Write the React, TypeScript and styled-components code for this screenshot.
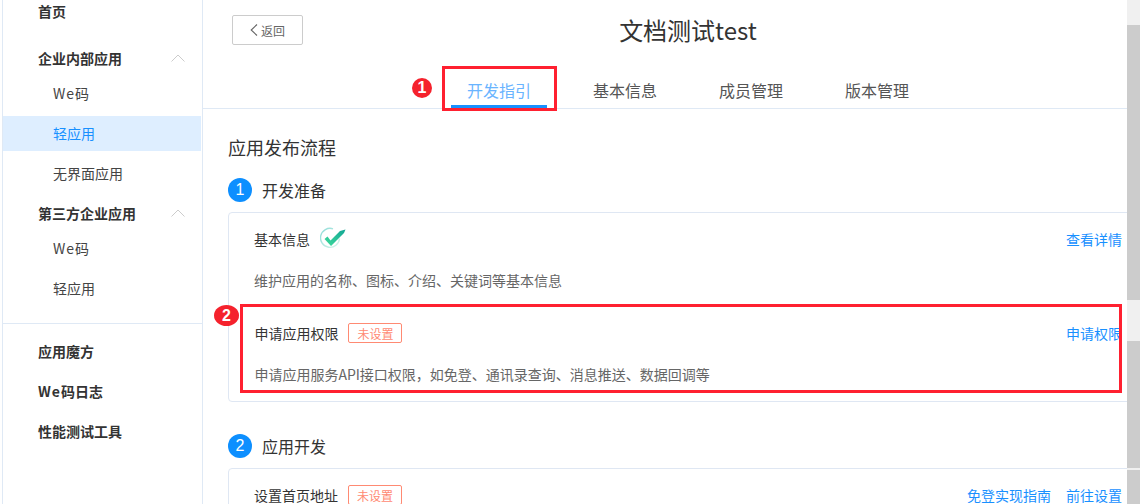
import styled, { createGlobalStyle } from "styled-components";

const GlobalStyle = createGlobalStyle`
  html, body {
    margin: 0;
    padding: 0;
    background: #fff;
    overflow: hidden;
  }
  * {
    box-sizing: border-box;
  }
`;

const Page = styled.div`
  position: relative;
  display: flex;
  width: 1140px;
  height: 504px;
  padding-left: 2px;
  overflow: hidden;
  font-family: "Noto Sans CJK SC", "Open Sans", sans-serif;
  font-size: 14px;
  color: #333;
`;

const Sidebar = styled.aside`
  flex: 0 0 201px;
  border-left: 1px solid #dfe9f5;
  border-right: 1px solid #dfe9f5;
`;

const NavList = styled.nav`
  display: flex;
  flex-direction: column;
  margin-top: -6px;
  margin-right: 1px;
`;

const NavTitle = styled.div<{ $gap?: number }>`
  display: flex;
  align-items: center;
  justify-content: space-between;
  height: 35px;
  margin-bottom: ${(p) => p.$gap ?? 0}px;
  padding: 0 16px 2px 35px;
  font-weight: 700;
  color: #333;
`;

const NavItem = styled.div<{ $active?: boolean }>`
  height: 35px;
  margin-bottom: 5px;
  padding-left: 50px;
  line-height: 35px;
  color: ${(p) => (p.$active ? "#1890ff" : "#444")};
  background: ${(p) => (p.$active ? "#deeeff" : "transparent")};
`;

const NavDivider = styled.hr`
  height: 1px;
  margin: 12px -1px 10px 0;
  border: 0;
  background: #dfe9f5;
`;

const WideLatin = styled.span`
  letter-spacing: 1px;
`;

const Main = styled.main`
  flex: 0 0 970px;
`;

const Header = styled.header`
  height: 109px;
  padding-top: 15px;
  border-bottom: 1px solid #dfe9f5;
`;

const HeaderTop = styled.div`
  position: relative;
  display: flex;
  justify-content: center;
  height: 51px;
`;

const BackButton = styled.button`
  position: absolute;
  left: 29px;
  top: 0;
  display: flex;
  align-items: center;
  justify-content: center;
  gap: 3px;
  width: 71px;
  height: 30px;
  padding: 0;
  border: 1px solid #ccc;
  border-radius: 2px;
  background: #fff;
  font: inherit;
  font-size: 12px;
  color: #666;
`;

const PageTitle = styled.h1`
  margin: 0;
  font-size: 24px;
  font-weight: 400;
  line-height: 30px;
  color: #333;
`;

const Tabs = styled.div`
  display: flex;
  justify-content: center;
  gap: 30px;
`;

const Tab = styled.div<{ $active?: boolean }>`
  height: 42px;
  padding: 0 16px;
  border-bottom: 3px solid ${(p) => (p.$active ? "#1890ff" : "transparent")};
  font-size: 16px;
  line-height: 49px;
  color: ${(p) => (p.$active ? "#69b4ff" : "#555")};
`;

const Content = styled.section`
  padding: 23px 25px 0;
`;

const FlowTitle = styled.h2`
  margin: 0 0 16px;
  font-size: 18px;
  font-weight: 400;
  line-height: 30px;
  color: #333;
`;

const StepHeader = styled.div`
  display: flex;
  align-items: center;
  gap: 10px;
  height: 24px;
  margin-bottom: 10px;
  font-size: 16px;
  line-height: 24px;
  color: #333;
`;

const StepNumber = styled.span`
  display: flex;
  align-items: center;
  justify-content: center;
  width: 24px;
  height: 24px;
  border-radius: 50%;
  background: #0d8fff;
  color: #fff;
  font-family: "Liberation Sans", sans-serif;
  font-size: 16px;
`;

const Card = styled.div`
  margin-bottom: 32px;
  padding: 0 25px;
  border: 1px solid #dfe7f3;
  border-radius: 4px;
`;

const CardRow = styled.div<{ $nudge?: boolean }>`
  height: 94px;
  padding-top: 16px;
  margin-left: ${(p) => (p.$nudge ? "0.4px" : "0")};
`;

const RowHead = styled.div`
  display: flex;
  align-items: center;
  height: 20px;
  margin-bottom: 21px;
`;

const RowName = styled.span`
  color: #333;
`;

const RowLinks = styled.div`
  display: flex;
  gap: 15px;
  margin-left: auto;
`;

const RowLink = styled.a`
  color: #1890ff;
  font-size: 14px;
`;

const RowText = styled.p`
  margin: 0;
  line-height: 20px;
  color: #666;
`;

const StatusTag = styled.span`
  display: flex;
  align-items: center;
  justify-content: center;
  width: 54px;
  height: 20px;
  margin-left: 10px;
  border: 1px solid #ff8a73;
  border-radius: 2px;
  font-size: 12px;
  color: #ff8a73;
`;

const DoneIcon = styled.svg`
  margin: -2px 0 0 10px;
`;

const Highlight = styled.div<{ $x: number; $y: number; $w: number; $h: number }>`
  position: absolute;
  left: ${(p) => p.$x}px;
  top: ${(p) => p.$y}px;
  width: ${(p) => p.$w}px;
  height: ${(p) => p.$h}px;
  border: 3px solid #ff2030;
`;

const Marker = styled.span<{ $x: number; $y: number; $w: number; $h: number }>`
  position: absolute;
  left: ${(p) => p.$x}px;
  top: ${(p) => p.$y}px;
  display: flex;
  align-items: center;
  justify-content: center;
  width: ${(p) => p.$w}px;
  height: ${(p) => p.$h}px;
  border-radius: 50%;
  background: #f5222d;
  color: #fff;
  font-family: "Liberation Sans", sans-serif;
  font-size: 16px;
  font-weight: 700;
`;

const Scrollbar = styled.div`
  position: absolute;
  top: 0;
  right: 0;
  bottom: 0;
  display: flex;
  flex-direction: column;
  width: 13px;
  background: #f0f0f0;
`;

const Thumb = styled.div<{ $top: number; $h: number }>`
  flex: none;
  height: ${(p) => p.$h}px;
  margin-top: ${(p) => p.$top}px;
  background: #ccc;
`;

const Chevron = () => (
  <svg width="14" height="8" viewBox="0 0 14 8" fill="none">
    <path d="M0.5 7.5 L7 1 L13.5 7.5" stroke="#ccc" strokeWidth="1" />
  </svg>
);

const BackArrow = () => (
  <svg width="8" height="12" viewBox="0 0 8 12" fill="none">
    <path d="M7 0.5 L1.2 6 L7 11.5" stroke="#666" strokeWidth="1.1" />
  </svg>
);

const CheckMark = () => (
  <DoneIcon width="26" height="22" viewBox="0 0 26 22" fill="none">
    <defs>
      <linearGradient id="check" x1="0" y1="1" x2="1" y2="0">
        <stop offset="0" stopColor="#3fdc9c" />
        <stop offset="1" stopColor="#12a594" />
      </linearGradient>
      <linearGradient id="ring" x1="0" y1="0" x2="1" y2="1">
        <stop offset="0" stopColor="#8fdcd8" />
        <stop offset="1" stopColor="#d6f5ea" />
      </linearGradient>
    </defs>
    <path d="M13 1.8 A9.5 9.5 0 1 0 19.5 11.5" stroke="url(#ring)" strokeWidth="1.4" />
    <path d="M4.5 12 L7.5 9.5 L10.5 13.5 L20 4 L25.5 2.5 L24 6 L11 19 Z" fill="url(#check)" />
  </DoneIcon>
);

export default function App() {
  return (
    <>
      <GlobalStyle />
      <Page>
        <Sidebar>
          <NavList>
            <NavTitle $gap={12}>首页</NavTitle>
            <NavTitle>
              企业内部应用
              <Chevron />
            </NavTitle>
            <NavItem>
              <WideLatin>We</WideLatin>码
            </NavItem>
            <NavItem $active>轻应用</NavItem>
            <NavItem>无界面应用</NavItem>
            <NavTitle>
              第三方企业应用
              <Chevron />
            </NavTitle>
            <NavItem>
              <WideLatin>We</WideLatin>码
            </NavItem>
            <NavItem>轻应用</NavItem>
            <NavDivider />
            <NavTitle $gap={5}>应用魔方</NavTitle>
            <NavTitle $gap={5}>
              <span>
                <WideLatin>We</WideLatin>码日志
              </span>
            </NavTitle>
            <NavTitle>性能测试工具</NavTitle>
          </NavList>
        </Sidebar>
        <Main>
          <Header>
            <HeaderTop>
              <BackButton>
                <BackArrow />
                返回
              </BackButton>
              <PageTitle>文档测试test</PageTitle>
            </HeaderTop>
            <Tabs>
              <Tab $active>开发指引</Tab>
              <Tab>基本信息</Tab>
              <Tab>成员管理</Tab>
              <Tab>版本管理</Tab>
            </Tabs>
          </Header>
          <Content>
            <FlowTitle>应用发布流程</FlowTitle>
            <StepHeader>
              <StepNumber>1</StepNumber>
              开发准备
            </StepHeader>
            <Card>
              <CardRow>
                <RowHead>
                  <RowName>基本信息</RowName>
                  <CheckMark />
                  <RowLinks>
                    <RowLink>查看详情</RowLink>
                  </RowLinks>
                </RowHead>
                <RowText>维护应用的名称、图标、介绍、关键词等基本信息</RowText>
              </CardRow>
              <CardRow $nudge>
                <RowHead>
                  <RowName>申请应用权限</RowName>
                  <StatusTag>未设置</StatusTag>
                  <RowLinks>
                    <RowLink>申请权限</RowLink>
                  </RowLinks>
                </RowHead>
                <RowText>申请应用服务API接口权限，如免登、通讯录查询、消息推送、数据回调等</RowText>
              </CardRow>
            </Card>
            <StepHeader>
              <StepNumber>2</StepNumber>
              应用开发
            </StepHeader>
            <Card>
              <CardRow>
                <RowHead>
                  <RowName>设置首页地址</RowName>
                  <StatusTag>未设置</StatusTag>
                  <RowLinks>
                    <RowLink>免登实现指南</RowLink>
                    <RowLink>前往设置</RowLink>
                  </RowLinks>
                </RowHead>
              </CardRow>
            </Card>
          </Content>
        </Main>
        <Highlight $x={442} $y={66} $w={115} $h={45} />
        <Highlight $x={240} $y={304} $w={882} $h={89} />
        <Marker $x={412} $y={78} $w={20} $h={20}>1</Marker>
        <Marker $x={214} $y={305} $w={25} $h={21}>2</Marker>
        <Scrollbar>
          <Thumb $top={25} $h={275} />
          <Thumb $top={41} $h={127} />
          <Thumb $top={2} $h={34} />
        </Scrollbar>
      </Page>
    </>
  );
}
